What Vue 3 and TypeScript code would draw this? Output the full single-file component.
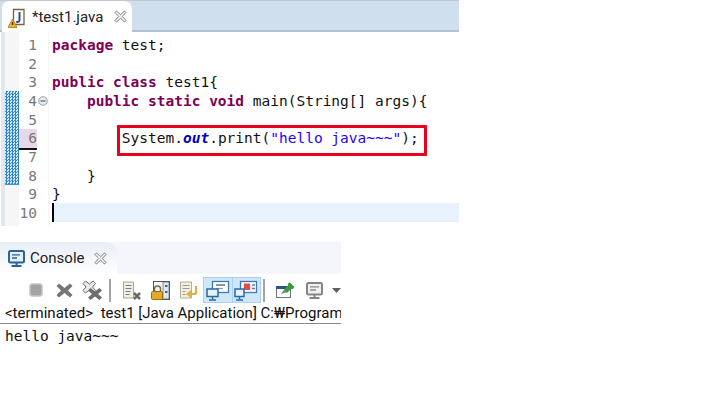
<script setup lang="ts">
interface Seg { t: string; c?: string }
const lines: Seg[][] = [
  [{ t: 'package', c: 'kw' }, { t: ' test;' }],
  [],
  [{ t: 'public class', c: 'kw' }, { t: ' test1{' }],
  [{ t: '    ' }, { t: 'public static void', c: 'kw' }, { t: ' main(String[] args){' }],
  [],
  [{ t: '        System.' }, { t: 'out', c: 'fld' }, { t: '.print(' }, { t: '"hello java~~~"', c: 'str' }, { t: ');' }],
  [],
  [{ t: '    }' }],
  [{ t: '}' }],
  [],
]
</script>

<template>
  <div class="page">
    <section class="editor">
      <header class="tabbar">
        <div class="tab">
          <svg class="fileicon" width="18" height="21" viewBox="0 0 18 21">
            <path d="M5.500 1.500h10.500v15H5.500z" fill="#fff" stroke="#7a6238" stroke-width="1.300" />
            <path d="M11.500 4v8c0 2-2 2.500-3.500 1.500" fill="none" stroke="#2a4f96" stroke-width="2" />
            <path d="M4.500 11 9 19.500H0z" fill="#f0b030" stroke="#a87818" stroke-width=".8" />
            <path d="M4.500 14v3" stroke="#4a3208" stroke-width="1.300" />
          </svg>
          <span class="tabname">*test1.java</span>
          <svg class="close" width="13" height="13" viewBox="0 0 13 13"><path d="M1 2.500 2.500 1 6.500 4.800 10.500 1 12 2.500 8.200 6.500 12 10.500 10.500 12 6.500 8.200 2.500 12 1 10.500 4.800 6.500z" fill="#fff" stroke="#6f757b" /></svg>
        </div>
      </header>
      <div class="editbody">
        <div class="leftrim"></div>
        <div class="overview"><div class="dither"></div></div>
        <div class="gutter">
          <div v-for="n in 10" :key="n" class="num" :class="{ mark: n === 6 }">{{ n }}
            <svg v-if="n === 4" class="fold" width="10" height="10" viewBox="0 0 10 10"><circle cx="5" cy="5" r="4.300" fill="#e8ebf0" stroke="#9aa3ad" /><path d="M2.500 5h5" stroke="#56606c" stroke-width="1.200" /></svg>
          </div>
        </div>
        <div class="code">
          <div v-for="(l, i) in lines" :key="i" class="line" :class="{ current: i === 9 }"><span v-for="(s, j) in l" :key="j" :class="s.c">{{ s.t }}</span></div>
          <div class="redbox"></div>
          <div class="caret"></div>
        </div>
      </div>
    </section>

    <section class="console">
      <header class="ctabbar">
        <div class="ctab">
          <svg class="cicon" width="17" height="17" viewBox="0 0 17 17">
            <rect x="1" y="1" width="15" height="11.500" rx="1.500" fill="#e4eef8" stroke="#2a6496" stroke-width="2" />
            <path d="M4 4.800h8M4 8h5" stroke="#2a6496" stroke-width="1.300" />
            <path d="M8.500 13v2M3.500 16h10" stroke="#2a6496" stroke-width="2" />
          </svg>
          <span class="tabname">Console</span>
          <svg class="close" width="13" height="13" viewBox="0 0 13 13"><path d="M1 2.500 2.500 1 6.500 4.800 10.500 1 12 2.500 8.200 6.500 12 10.500 10.500 12 6.500 8.200 2.500 12 1 10.500 4.800 6.500z" fill="#fff" stroke="#6f757b" /></svg>
        </div>
      </header>
      <div class="toolbar">
        <svg class="i-stop" width="14" height="14" viewBox="0 0 14 14"><rect x="1" y="1" width="12" height="12" rx="2.500" fill="#a2a2a2" stroke="#c4c4c4" stroke-width="1.500" /></svg>
        <svg class="i-x" width="17" height="15" viewBox="0 0 17 15"><path d="M.5 3 3 .5 8.500 5 14 .5 16.500 3 12 7.500 16.500 12 14 14.500 8.500 10 3 14.500.5 12 5 7.500z" fill="#767676" /></svg>
        <svg class="i-xx" width="21" height="21" viewBox="0 0 21 21"><path d="M1 3.500 3.500 1 7.500 4 11 1 13.500 3.500 10.500 7 13.500 10.500 11 13 7.500 10 3.500 13 1 10.500 4 7z" fill="#e8e8e8" stroke="#6e6e6e" /><path d="M6 10.500 8.500 8 13 11.500 17.500 8 20 10.500 16 14 20 17.500 17.500 20 13 16.500 8.500 20 6 17.500 10 14z" fill="#6e6e6e" /></svg>
        <i class="sep s1"></i>
        <svg class="i-doc" width="19" height="19" viewBox="0 0 19 19"><path d="M1.500 1h10v16h-10z" fill="#f4efdc" stroke="#a8a68e" /><path d="M3.500 4.500h6M3.500 7.500h6M3.500 10.500h5M3.500 13.500h4" stroke="#6e7ea0" /><path d="M12 12 18 18M18 12 12 18" stroke="#6a6a6a" stroke-width="2.500" /></svg>
        <svg class="i-lock" width="19" height="19" viewBox="0 0 19 19"><rect x="2.500" y=".5" width="16" height="18" fill="#f4f6fa" stroke="#4e5660" /><rect x="12" y="1" width="6" height="17" fill="#dfe8f2" stroke="#4e5660" stroke-width=".6" /><path d="M14 5h2.500M14 11h2.500" stroke="#2a6aa8" stroke-width="2" /><path d="M3.500 11V8a3 3 0 0 1 6 0v3" fill="none" stroke="#7a6a40" stroke-width="1.500" /><rect x=".5" y="10.500" width="11" height="8" rx="1" fill="#e8a828" stroke="#93701a" /></svg>
        <svg class="i-doc3" width="20" height="19" viewBox="0 0 20 19"><path d="M1.500 1h11v16h-11z" fill="#f4efdc" stroke="#b0ae98" /><path d="M3.500 4.500h7M3.500 7.500h7M3.500 10.500h3M3.500 13.500h3" stroke="#9a9aa2" /><path d="M17 5v6.500a1.500 1.500 0 0 1-1.500 1.500H9l3-3M9 13l3 3" fill="none" stroke="#dcb050" stroke-width="2.200" /></svg>
        <div class="toggle">
          <div class="cell">
            <svg width="26" height="22" viewBox="0 0 26 22"><rect x="7.500" y="2.500" width="16" height="11" fill="#fff" stroke="#3f7cb0" stroke-width="1.300" /><path d="M11 6h9" stroke="#4a5a6a" stroke-width="1.300" /><path d="M11 9.500h7" stroke="#8aa0b4" stroke-width="1.300" /><rect x="2" y="10" width="11" height="7.500" fill="#e8f2fb" stroke="#2a6aa0" stroke-width="1.500" /><path d="M7.500 18v2M4 21h7" stroke="#2a6aa0" stroke-width="1.500" /></svg>
          </div>
          <div class="cell">
            <svg width="26" height="22" viewBox="0 0 26 22"><rect x="7.500" y="2.500" width="16" height="11" fill="#fff" stroke="#3f7cb0" stroke-width="1.300" /><rect x="11" y="4.500" width="6" height="6.500" fill="#e84a4a" /><path d="M19 6h3M19 9.500h3" stroke="#6a7a8a" stroke-width="1.300" /><rect x="2" y="10" width="9" height="7.500" fill="#e8f2fb" stroke="#2a6aa0" stroke-width="1.500" /><path d="M6.500 18v2M3 21h7" stroke="#2a6aa0" stroke-width="1.500" /></svg>
          </div>
        </div>
        <i class="sep s2"></i>
        <svg class="i-pin" width="19" height="16" viewBox="0 0 19 16"><rect x=".5" y="4.500" width="14" height="11" fill="#fdfdfd" stroke="#6a7480" /><rect x="0" y="4" width="15" height="3" fill="#27567f" /><path d="M5 12 8 8 11 10z" fill="#6a7480" /><path d="M8 7.500 12 3.500 12 1.500 14 .5 18.500 5 17 7 15 7 11 11z" fill="#3c9a38" /></svg>
        <svg class="i-mon" width="17" height="17" viewBox="0 0 17 17"><rect x="1" y="1" width="15" height="11.500" rx="1.500" fill="#f0f0f0" stroke="#858585" stroke-width="2" /><path d="M4 4.800h9M4 8h6" stroke="#8a8a8a" stroke-width="1.300" /><path d="M8.500 13v2M3.500 16h10" stroke="#858585" stroke-width="2" /></svg>
        <svg class="i-arrow" width="9" height="5" viewBox="0 0 9 5"><path d="M0 0h9L4.500 5z" fill="#5e5e5e" /></svg>
      </div>
      <div class="status"><span class="term">&lt;terminated&gt;</span> test1 [Java Application] C:₩Program</div>
      <div class="output">hello java~~~</div>
    </section>
  </div>
</template>

<style>
html, body { margin: 0; background: #fff; }
</style>

<style scoped>
.page { width: 720px; height: 404px; overflow: hidden; background: #fff; font-family: Roboto, "Noto Sans", sans-serif; }

.editor { width: 459px; height: 240px; display: flex; flex-direction: column; overflow: hidden; }
.tabbar { height: 32px; flex: none; box-sizing: border-box; background: #cfdfee; border-top: 1px solid #c4c8cc; border-bottom: 2px solid #b4c0cc; position: relative; }
.tab { position: absolute; left: 2px; top: 0; width: 130px; height: 31px; background: #fff; border-radius: 7px 8px 0 0; display: flex; align-items: center; padding-left: 6px; box-sizing: border-box; }
.fileicon { flex: none; margin: 3px 6px 0 0; }
.tabname { font-size: 15px; color: #222; white-space: nowrap; }
.close { margin-left: 11px; flex: none; }

.editbody { flex: 1; display: flex; min-height: 0; padding-top: 4px; }
.leftrim { width: 5px; flex: none; background: linear-gradient(90deg, #fff 1px, #e2e6ee 1px); margin: -4px 0 14px; }
.overview { width: 14px; flex: none; background: #f6f6f6; margin: -4px 0 14px; }
.dither { margin-top: 59px; height: 93px; background-color: #cfe6f8; background-image: repeating-conic-gradient(#2b84d6 0 25%, #dcedfa 0 50%); background-size: 3px 3px; border-bottom: 1px solid #3f90e0; }
.gutter { width: 29px; flex: none; background: #fff; margin: -4px 0 14px; padding-top: 4px; border-right: 1px solid #f4f4f4; font: 14.500px/18.670px "DejaVu Sans Mono", monospace; color: #787878; }
.num { height: 18.670px; position: relative; text-align: right; padding-right: 11px; box-sizing: border-box; }
.num.mark { background: #e6d8e6; margin-right: 11px; padding-right: 0; box-shadow: 0 2px 0 #111; }
.fold { position: absolute; left: 19px; top: 4px; }

.code { position: relative; flex: 1; padding-left: 3px; font: 14.500px/18.670px "DejaVu Sans Mono", monospace; color: #111; }
.line { height: 18.670px; white-space: pre; }
.line.current { background: #e8f2fe; margin-top: -1px; }
.kw { color: #7f0055; font-weight: 700; }
.fld { color: #0000c0; font-style: italic; font-weight: 700; }
.str { color: #2a00ff; }
.redbox { position: absolute; left: 68px; top: 89px; width: 310px; height: 31px; box-sizing: border-box; border: 3px solid #e8001c; }
.caret { position: absolute; left: 3px; top: 167px; width: 2px; height: 19px; background: #000; }

.console { width: 341px; }
.ctabbar { height: 33px; margin-top: 1px; background: linear-gradient(#fff 0, #fff 1px, #f5f6fa 1px); position: relative; }
.ctab { position: absolute; left: 0; top: 1px; width: 117px; height: 32px; box-sizing: border-box; background: linear-gradient(#e8eef7, #fff); border-radius: 0 10px 0 0; display: flex; align-items: center; padding-left: 8px; }
.cicon { flex: none; margin-right: 5px; }
.ctab .close { margin-left: 9px; }
.toolbar { height: 29px; box-sizing: border-box; padding: 3px 0 0 29px; display: flex; align-items: center; }
.toolbar svg { flex: none; }
.i-x { margin-left: 13px; }
.i-xx { margin-left: 9px; }
.sep { width: 2px; height: 23px; background: #a4a4a4; flex: none; }
.s1 { margin-left: 6px; }
.i-doc { margin-left: 11px; }
.i-lock { margin-left: 10px; }
.i-doc3 { margin-left: 9px; }
.toggle { display: flex; margin-left: 4px; width: 58px; height: 26px; flex: none; gap: 1px; background: #a9d1f5; padding: 1px; box-sizing: border-box; }
.cell { flex: 1; background: #cfe6fb; display: flex; align-items: center; justify-content: center; }
.s2 { margin-left: 2px; }
.i-pin { margin-left: 11px; }
.i-mon { margin-left: 11px; }
.i-arrow { margin-left: 9px; }
.status { height: 20px; box-sizing: border-box; font-size: 15px; line-height: 20px; color: #111; white-space: nowrap; overflow: hidden; padding-left: 5px; }
.term { margin-right: 4px; }
.output { border-top: 1px solid #888; padding: 3px 0 0 5px; font: 14.500px/18px "DejaVu Sans Mono", monospace; color: #111; }
</style>
